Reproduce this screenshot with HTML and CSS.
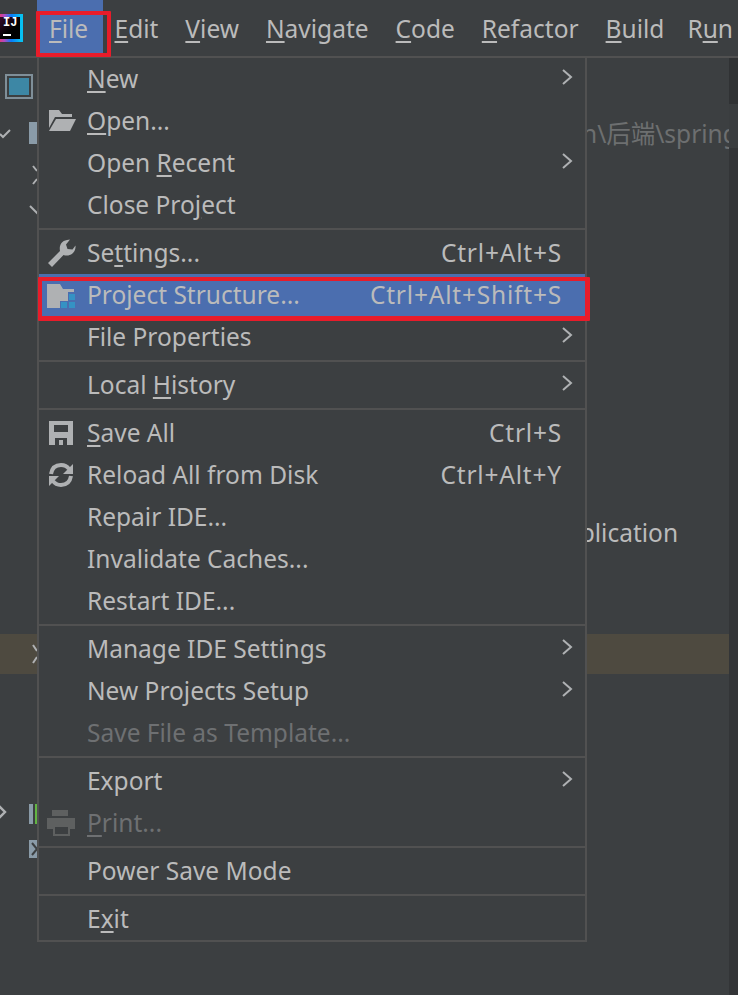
FILE: index.html
```html
<!DOCTYPE html>
<html lang="en">
<head>
<meta charset="utf-8">
<title>File menu</title>
<link rel="stylesheet" href="styles.css">
</head>
<body>
<div class="ide">
  <header class="menubar">
    <div class="logo-slot"><div class="logo"><span class="logo-text">IJ</span><span class="logo-bar"></span></div></div>
    <div class="top-item top-active"><u>F</u>ile</div>
    <div class="top-item"><u>E</u>dit</div>
    <div class="top-item"><u>V</u>iew</div>
    <div class="top-item"><u>N</u>avigate</div>
    <div class="top-item"><u>C</u>ode</div>
    <div class="top-item"><u>R</u>efactor</div>
    <div class="top-item"><u>B</u>uild</div>
    <div class="top-item top-run">R<u>u</u>n</div>
  </header>
  <div class="workspace">
    <aside class="gutter">
      <div class="tool-icon"><div class="tool-icon-inner"></div></div>
      <div class="g-row g-check">
        <svg class="g-svg" width="37" height="22" viewBox="0 0 37 22"><path d="M0 12l3 3 7-7" fill="none" stroke="#afb1b3" stroke-width="2"/><rect x="29" y="0" width="8" height="22" fill="#8a9ba8"/></svg>
      </div>
      <div class="g-row g-chev1">
        <svg class="g-svg" width="37" height="20" viewBox="0 0 37 20"><path d="M33 1l4 5M37 14l-4 5" fill="none" stroke="#afb1b3" stroke-width="2"/></svg>
      </div>
      <div class="g-row g-chev2">
        <svg class="g-svg" width="37" height="12" viewBox="0 0 37 12"><path d="M30 1l8 8" fill="none" stroke="#afb1b3" stroke-width="2"/></svg>
      </div>
      <div class="g-band">
        <svg class="g-svg" width="37" height="40" viewBox="0 0 37 40"><path d="M33 11l4 6M37 23l-4 6" fill="none" stroke="#afb1b3" stroke-width="2"/></svg>
      </div>
      <div class="g-row g-bars">
        <svg class="g-svg" width="37" height="20" viewBox="0 0 37 20"><path d="M-1 2l6 6-6 6" fill="none" stroke="#afb1b3" stroke-width="2.4"/><rect x="29" width="4" height="20" fill="#8a9ba8"/><rect x="35" width="2" height="20" fill="#62b543"/></svg>
      </div>
      <div class="g-row g-box">
        <svg class="g-svg" width="37" height="18" viewBox="0 0 37 18"><rect x="29" width="8" height="18" fill="#8a9ba8"/><path d="M32 3l5 6-5 6" fill="none" stroke="#3c3f41" stroke-width="2"/></svg>
      </div>
    </aside>
    <main class="editor">
      <div class="line path-line">n\后端\spring</div>
      <div class="line app-line">Application</div>
      <div class="line-band"></div>
    </main>
    <div class="scrollbar"><div class="scroll-top"></div><div class="scroll-thumb"></div></div>
  </div>

  <nav class="menu">
    <div class="row"><span class="ico"></span><span class="lbl"><u>N</u>ew</span><svg class="arrow" width="12" height="18" viewBox="0 0 12 18"><path d="M2 2l8 7-8 7" fill="none" stroke="#afb1b3" stroke-width="2"/></svg></div>
    <div class="row"><span class="ico"><svg width="30" height="24" viewBox="0 0 30 24"><path d="M3 1h10l3 4h10v3H9L3 19z" fill="#afb1b3"/><path d="M10 10h20l-6 12H3z" fill="#afb1b3"/></svg></span><span class="lbl"><u>O</u>pen...</span></div>
    <div class="row"><span class="ico"></span><span class="lbl">Open <u>R</u>ecent</span><svg class="arrow" width="12" height="18" viewBox="0 0 12 18"><path d="M2 2l8 7-8 7" fill="none" stroke="#afb1b3" stroke-width="2"/></svg></div>
    <div class="row"><span class="ico"></span><span class="lbl">Close Pro<u>j</u>ect</span></div>
    <div class="sep"></div>
    <div class="row"><span class="ico"><svg width="30" height="28" viewBox="0 0 30 28"><path d="M2 24l12-12c-1-5 1-10 7-11l3-.5-4 5 1.500 4.500 5 .5 3-4c.5 5-3 10-8.500 10-1.500 0-2.500 0-3.500-.5L6 28z" fill="#afb1b3"/></svg></span><span class="lbl">Se<u>t</u>tings...</span><span class="keys">Ctrl+Alt+S</span></div>
    <div class="row row-active"><span class="ico"><svg width="30" height="26" viewBox="0 0 30 26"><path d="M1 2h13l3 5h11v3h-6v9h-8v7H1z" fill="#afb1b3"/><rect x="23" y="12" width="6" height="6" fill="#3592c4"/><rect x="15" y="20" width="6" height="6" fill="#3592c4"/><rect x="23" y="20" width="6" height="6" fill="#3592c4"/></svg></span><span class="lbl">Project Structure...</span><span class="keys">Ctrl+Alt+Shift+S</span></div>
    <div class="row"><span class="ico"></span><span class="lbl">File Properties</span><svg class="arrow" width="12" height="18" viewBox="0 0 12 18"><path d="M2 2l8 7-8 7" fill="none" stroke="#afb1b3" stroke-width="2"/></svg></div>
    <div class="sep"></div>
    <div class="row"><span class="ico"></span><span class="lbl">Local <u>H</u>istory</span><svg class="arrow" width="12" height="18" viewBox="0 0 12 18"><path d="M2 2l8 7-8 7" fill="none" stroke="#afb1b3" stroke-width="2"/></svg></div>
    <div class="sep"></div>
    <div class="row"><span class="ico"><svg width="30" height="26" viewBox="0 0 30 26"><path fill-rule="evenodd" d="M3 1h24v24H3zM8 5v7h14V5zM9 18v7h12v-7zM13 20h4v5h-4z" fill="#afb1b3"/></svg></span><span class="lbl"><u>S</u>ave All</span><span class="keys">Ctrl+S</span></div>
    <div class="row"><span class="ico"><svg width="30" height="26" viewBox="0 0 30 26"><path d="M5 12C6 6 10 3 15 3c3 0 6 1 8 4" fill="none" stroke="#afb1b3" stroke-width="4"/><path d="M27 2v10H17z" fill="#afb1b3"/><path d="M25 14c-1 6-5 9-10 9-3 0-6-1-8-4" fill="none" stroke="#afb1b3" stroke-width="4"/><path d="M3 24V14h10z" fill="#afb1b3"/></svg></span><span class="lbl">Reload All from Disk</span><span class="keys">Ctrl+Alt+Y</span></div>
    <div class="row"><span class="ico"></span><span class="lbl">Repair IDE...</span></div>
    <div class="row"><span class="ico"></span><span class="lbl">Invalidate Caches...</span></div>
    <div class="row"><span class="ico"></span><span class="lbl">Restart IDE...</span></div>
    <div class="sep"></div>
    <div class="row"><span class="ico"></span><span class="lbl">Manage IDE Settings</span><svg class="arrow" width="12" height="18" viewBox="0 0 12 18"><path d="M2 2l8 7-8 7" fill="none" stroke="#afb1b3" stroke-width="2"/></svg></div>
    <div class="row"><span class="ico"></span><span class="lbl">New Projects Setup</span><svg class="arrow" width="12" height="18" viewBox="0 0 12 18"><path d="M2 2l8 7-8 7" fill="none" stroke="#afb1b3" stroke-width="2"/></svg></div>
    <div class="row row-off"><span class="ico"></span><span class="lbl">Save File as Template...</span></div>
    <div class="sep"></div>
    <div class="row"><span class="ico"></span><span class="lbl">Export</span><svg class="arrow" width="12" height="18" viewBox="0 0 12 18"><path d="M2 2l8 7-8 7" fill="none" stroke="#afb1b3" stroke-width="2"/></svg></div>
    <div class="row row-off"><span class="ico"><svg width="30" height="28" viewBox="0 0 30 28"><rect x="6" y="1" width="16" height="6" fill="#5e6060"/><path fill-rule="evenodd" d="M1 9h28v11h-5v7H7v-7H1zM9 18v7h13v-7z" fill="#5e6060"/></svg></span><span class="lbl"><u>P</u>rint...</span></div>
    <div class="sep"></div>
    <div class="row"><span class="ico"></span><span class="lbl">Power Save Mode</span></div>
    <div class="sep"></div>
    <div class="row"><span class="ico"></span><span class="lbl">E<u>x</u>it</span></div>
  </nav>

  <div class="mark mark-file"></div>
  <div class="mark mark-structure"></div>
</div>
</body>
</html>
```
FILE: styles.css
```css
* { box-sizing: border-box; }
html, body { margin: 0; padding: 0; }
body {
  width: 738px;
  height: 995px;
  overflow: hidden;
  background: #3c3f41;
  color: #bbbbbb;
  font-family: "Noto Sans", "Open Sans", "Noto Sans CJK SC", sans-serif;
  font-size: 24.5px;
}
u { text-decoration-thickness: 2px; text-underline-offset: 3px; }

.ide { position: relative; width: 738px; height: 995px; overflow: hidden; }

/* menu bar */
.menubar {
  display: flex;
  align-items: center;
  height: 58px;
  padding-bottom: 2px;
  border-bottom: 2px solid #515151;
}
.logo-slot { width: 37px; flex: none; }
.logo {
  position: relative;
  width: 28px;
  height: 28px;
  margin: 2px 0 0 -5px;
  border: 3px solid;
  border-image: linear-gradient(90deg, #fe315d, #b04bc0 30%, #087cfa 60%, #07c3f2) 1;
  background: linear-gradient(135deg, #3a0a30, #000 60%);
  color: #fff;
}
.logo-text {
  display: block;
  padding-left: 5px;
  font: bold 12px/13px "Liberation Mono", monospace;
}
.logo-bar { display: block; width: 8px; height: 2px; margin: 4px 0 0 5px; background: #fff; }
.top-item {
  flex: none;
  height: 56px;
  padding: 0 13.5px;
  line-height: 60px;
}
.top-active {
  width: 66px;
  margin-right: -2px;
  padding: 0 0 0 12px;
  background: #4b6eaf;
}
.top-run { margin-left: -4px; }

/* background panes */
.workspace { display: flex; height: 937px; }
.gutter { width: 37px; flex: none; }
.tool-icon {
  width: 28px;
  height: 25px;
  margin: 16px 0 0 5px;
  padding: 2px;
  background: #7f8f99;
}
.tool-icon-inner {
  height: 100%;
  border: 2px solid #3c3f41;
  background: #3d87a5;
}
.g-svg { display: block; overflow: visible; }
.g-row { height: auto; }
.g-check { margin-top: 23px; }
.g-chev1 { margin-top: 21px; }
.g-chev2 { margin-top: 20px; }
.g-band { height: 40px; margin-top: 417px; background: #4e4a40; }
.g-bars { margin-top: 130px; }
.g-box { margin-top: 16px; }

.editor { flex: 1; min-width: 0; overflow: hidden; }
.line { white-space: nowrap; line-height: 32px; }
.path-line { margin-top: 60px; padding-left: 545px; color: #6d6f70; }
.app-line { margin-top: 367px; padding-left: 512px; color: #bbbbbb; }
.line-band { height: 40px; margin-top: 85px; background: #4e4a40; }

.scrollbar { width: 9px; flex: none; background: #333537; }
.scroll-top { height: 46px; background: #303234; }
.scroll-thumb { height: 44px; background: #3a3d3f; }

/* dropdown */
.menu {
  position: absolute;
  left: 37px;
  top: 56px;
  width: 550px;
  height: 886px;
  border: 2px solid #515151;
  background: #3c3f41;
}
.row {
  display: flex;
  align-items: center;
  height: 42px;
  padding: 0 24px 0 7px;
  white-space: nowrap;
}
.row-active { background: #4b6eaf; }
.row-off { color: #6e7072; }
.ico {
  display: flex;
  align-items: center;
  width: 41px;
  flex: none;
}
.lbl { padding-bottom: 2px; }
.keys { margin-left: auto; margin-right: -1px; padding-bottom: 2px; letter-spacing: 0.8px; }
.arrow { margin-left: auto; margin-right: -12px; margin-top: -4px; flex: none; }
.sep { height: 6px; padding: 2px 0; }
.sep::before { content: ""; display: block; height: 2px; background: #515151; }

/* red annotations */
.mark { position: absolute; border: 4px solid #e81c2a; border-radius: 1px; }
.mark-file { left: 36px; top: 11px; width: 75px; height: 46px; }
.mark-structure { left: 38px; top: 277px; width: 552px; height: 44px; border-width: 4px 5px 5px 4px; }
```
